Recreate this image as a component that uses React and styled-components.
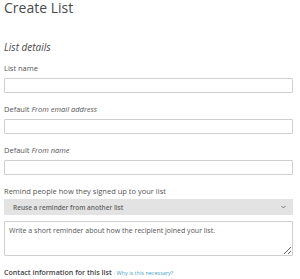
import React from 'react'
import styled, {createGlobalStyle} from 'styled-components'

const Global = createGlobalStyle`
  body {
    margin: 0;
    background: #fff;
    font-family: "Open Sans", "Liberation Sans", sans-serif;
    color: #555;
  }
`

const Page = styled.div`
  width: 300px;
  padding: 0 7px 0 4px;
  box-sizing: border-box;
`

const Title = styled.h1`
  margin: 0;
  font-size: 14px;
  line-height: 16px;
  font-weight: 400;
  color: #4a4a4a;
`

const Section = styled.h2`
  margin: 25px 0 0;
  font-size: 10px;
  line-height: 12px;
  font-weight: 400;
  font-style: italic;
  color: #4a4a4a;
`

const Form = styled.form`
  display: flex;
  flex-direction: column;
  gap: 11px;
  margin-top: 10px;
`

const Field = styled.div`
  display: flex;
  flex-direction: column;
  gap: 5px;
`

const Label = styled.label`
  font-size: ${({strong}) => strong ? '7.1px' : '7.5px'};
  line-height: 10px;
  color: ${({strong}) => strong ? '#444' : '#555'};
  font-weight: ${({strong}) => strong ? 600 : 400};
  em { font-style: italic; }
`

const Input = styled.input`
  height: 15px;
  border: 1px solid #cfcfcf;
  border-radius: 1px;
  box-sizing: border-box;
  padding: 0 4px;
  margin: 0;
  background: #fff;
`

const Select = styled.div`
  height: 16px;
  margin-top: -2px;
  background: #e3e3e3;
  display: flex;
  align-items: center;
  justify-content: space-between;
  padding: 0 7px 0 9px;
  font-size: 6.5px;
  font-weight: 600;
  color: #666;
`

const TextArea = styled.textarea`
  height: 35px;
  margin: 1px 0 0;
  border: 1px solid #cfcfcf;
  border-radius: 1px;
  box-sizing: border-box;
  padding: 4px 4px;
  resize: vertical;
  font-family: "Open Sans", "Liberation Sans", sans-serif;
  font-size: 7px;
  line-height: 10px;
  color: #555;
  &::placeholder { color: #555; }
`

const Link = styled.a`
  font-size: 5.5px;
  font-weight: 400;
  color: #4f9fbf;
  text-decoration: none;
`

function Chevron() {
  return (
    <svg width="5" height="4" viewBox="0 0 5 4">
      <path d="M0.5 1 L2.5 3 L4.5 1" fill="none" stroke="#777" strokeWidth="1" />
    </svg>
  )
}

export default function App() {
  return (
    <Page>
      <Global />
      <Title>Create List</Title>
      <Section>List details</Section>
      <Form onSubmit={e => e.preventDefault()}>
        <Field>
          <Label>List name</Label>
          <Input type="text" />
        </Field>
        <Field>
          <Label>Default <em>From email address</em></Label>
          <Input type="text" />
        </Field>
        <Field>
          <Label>Default <em>From name</em></Label>
          <Input type="text" />
        </Field>
        <Field>
          <Label>Remind people how they signed up to your list</Label>
          <Select>
            <span>Reuse a reminder from another list</span>
            <Chevron />
          </Select>
          <TextArea placeholder="Write a short reminder about how the recipient joined your list." />
        </Field>
        <Field>
          <Label strong>Contact information for this list <Link href="#">· Why is this necessary?</Link></Label>
        </Field>
      </Form>
    </Page>
  )
}
